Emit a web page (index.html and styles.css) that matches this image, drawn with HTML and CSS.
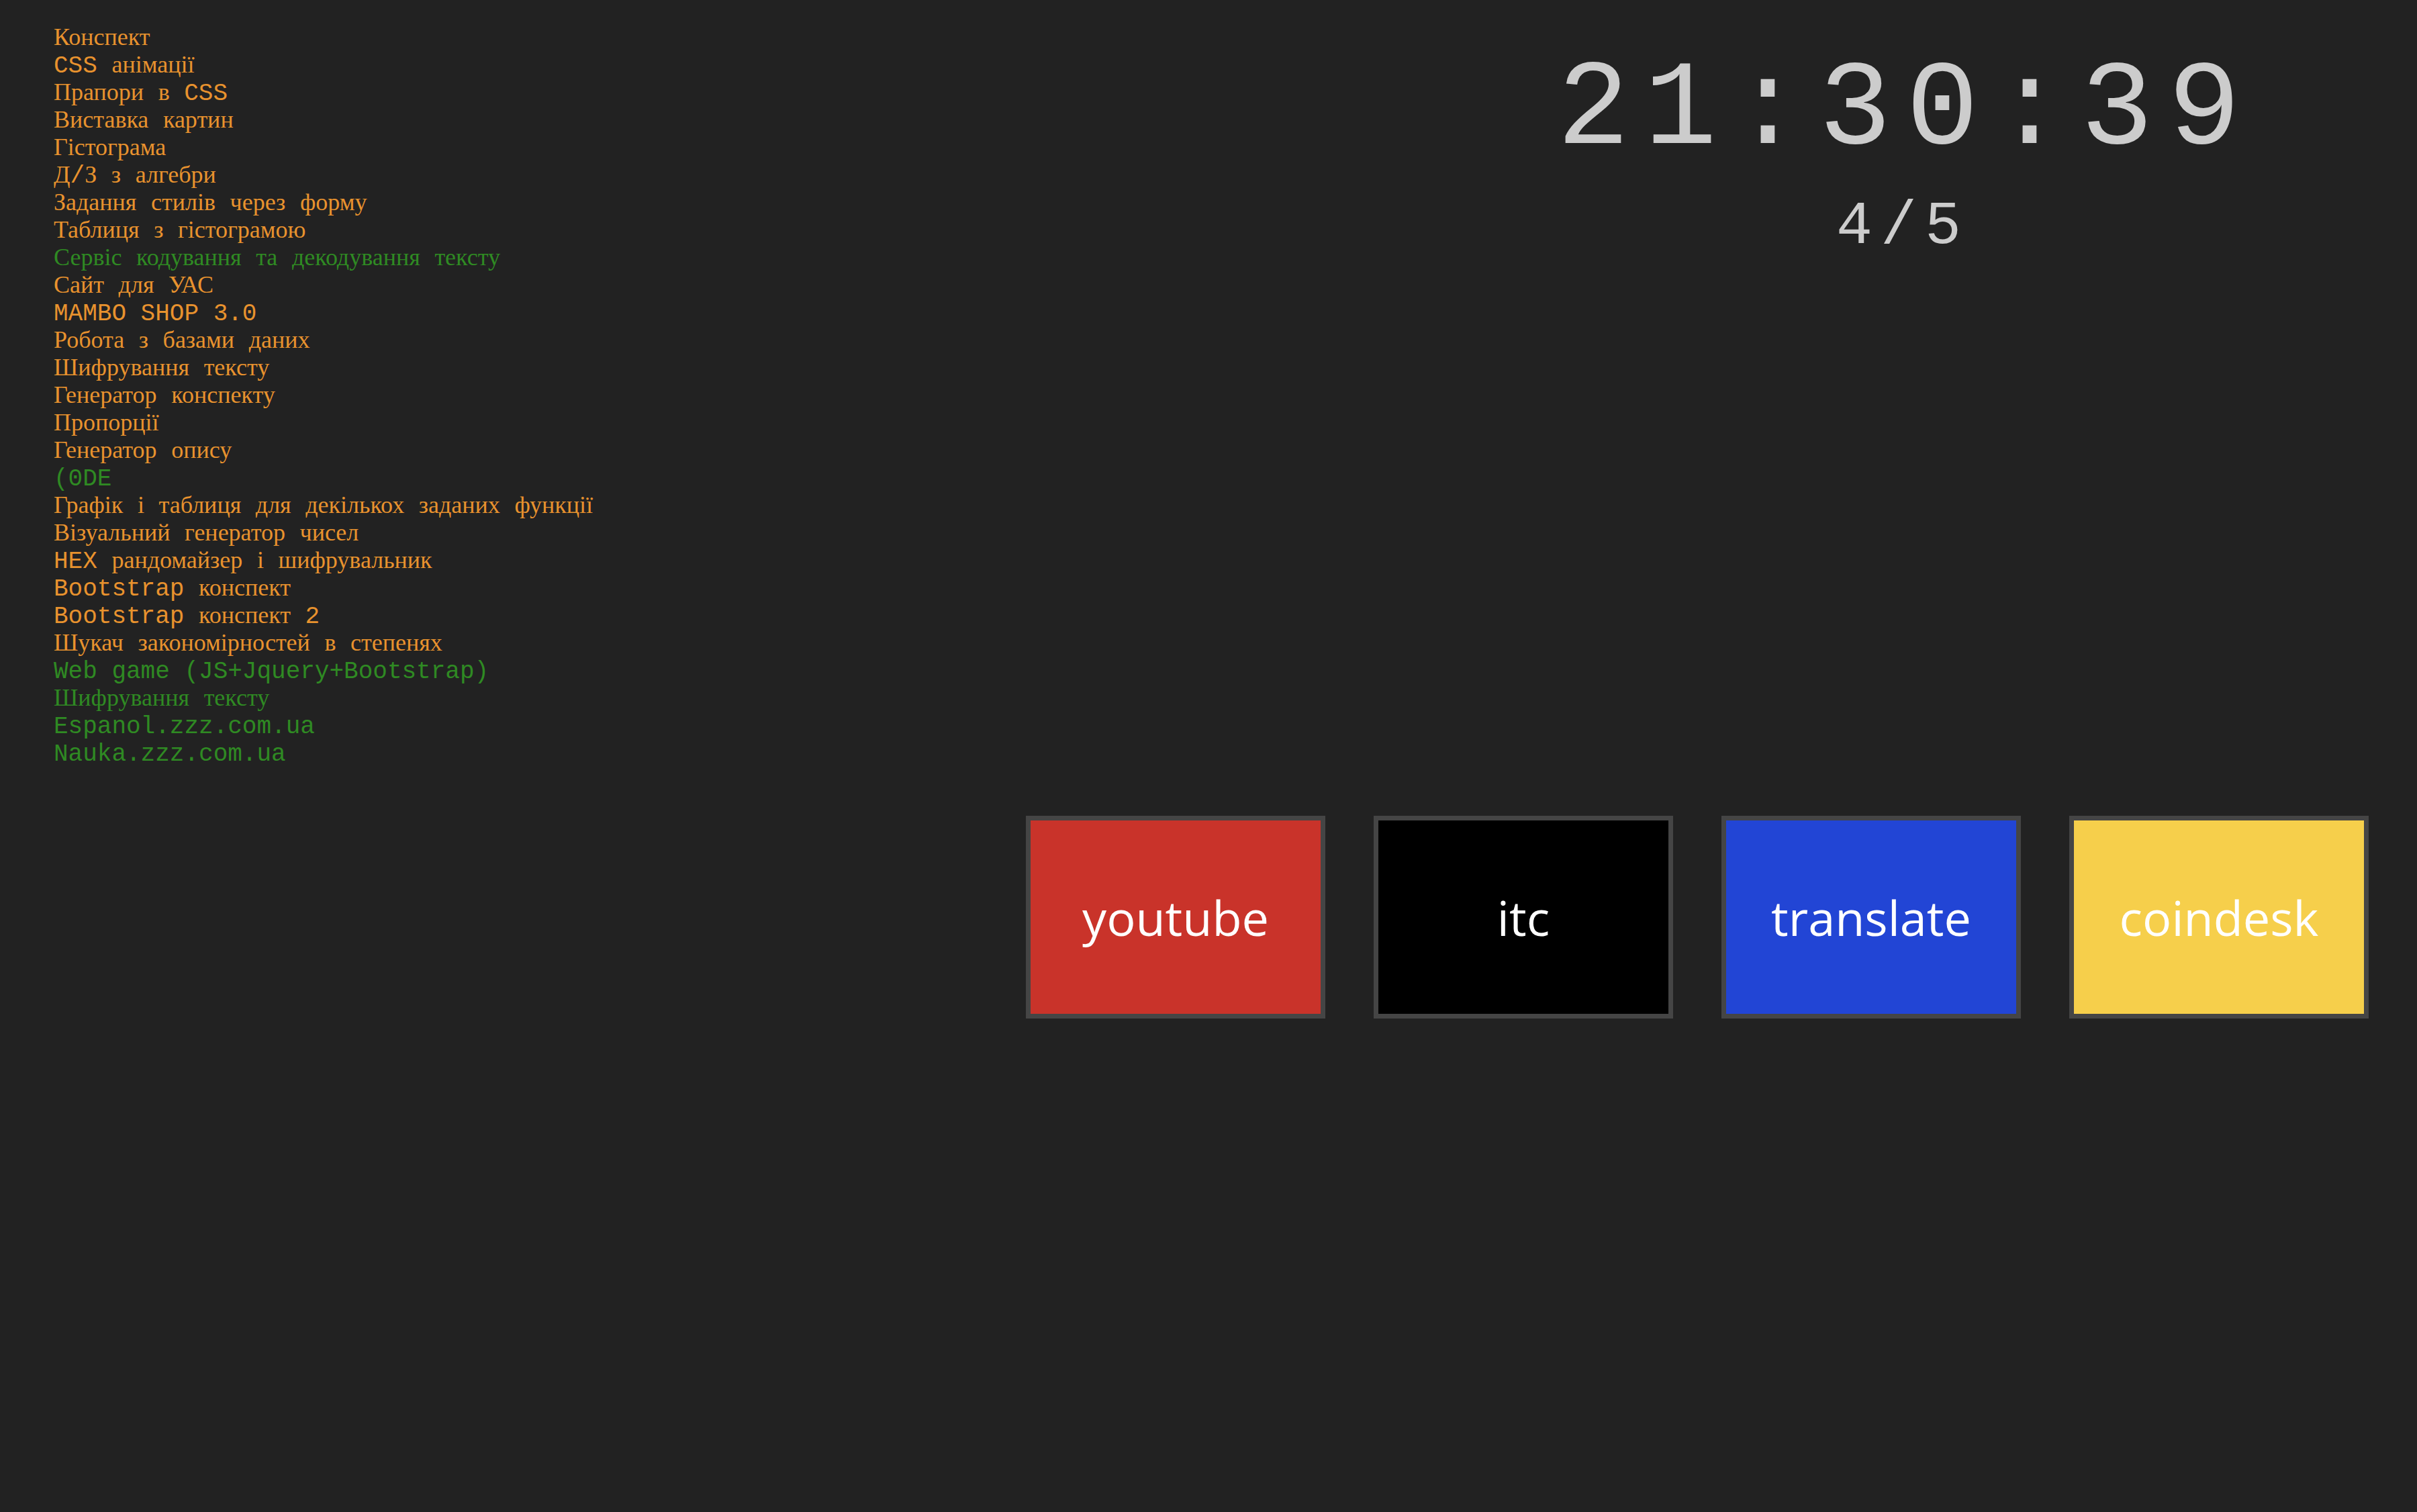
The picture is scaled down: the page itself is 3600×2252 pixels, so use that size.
FILE: index.html
```html
<!DOCTYPE html>
<html lang="uk">
<head>
<meta charset="utf-8">
<title>Start</title>
<link rel="stylesheet" href="styles.css">
</head>
<body>
<div class="top">
  <ul class="links">
    <li class="o"><a><span class="cy">Конспект</span></a></li>
    <li class="o"><a>CSS <span class="cy">анімації</span></a></li>
    <li class="o"><a><span class="cy">Прапори</span> <span class="cy">в</span> CSS</a></li>
    <li class="o"><a><span class="cy">Виставка</span> <span class="cy">картин</span></a></li>
    <li class="o"><a><span class="cy">Гістограма</span></a></li>
    <li class="o"><a><span class="cy">Д</span>/<span class="cy">З</span> <span class="cy">з</span> <span class="cy">алгебри</span></a></li>
    <li class="o"><a><span class="cy">Задання</span> <span class="cy">стилів</span> <span class="cy">через</span> <span class="cy">форму</span></a></li>
    <li class="o"><a><span class="cy">Таблиця</span> <span class="cy">з</span> <span class="cy">гістограмою</span></a></li>
    <li class="g"><a><span class="cy">Сервіс</span> <span class="cy">кодування</span> <span class="cy">та</span> <span class="cy">декодування</span> <span class="cy">тексту</span></a></li>
    <li class="o"><a><span class="cy">Сайт</span> <span class="cy">для</span> <span class="cy">УАС</span></a></li>
    <li class="o"><a>MAMBO SHOP 3.0</a></li>
    <li class="o"><a><span class="cy">Робота</span> <span class="cy">з</span> <span class="cy">базами</span> <span class="cy">даних</span></a></li>
    <li class="o"><a><span class="cy">Шифрування</span> <span class="cy">тексту</span></a></li>
    <li class="o"><a><span class="cy">Генератор</span> <span class="cy">конспекту</span></a></li>
    <li class="o"><a><span class="cy">Пропорції</span></a></li>
    <li class="o"><a><span class="cy">Генератор</span> <span class="cy">опису</span></a></li>
    <li class="g"><a>(0DE</a></li>
    <li class="o"><a><span class="cy">Графік</span> <span class="cy">і</span> <span class="cy">таблиця</span> <span class="cy">для</span> <span class="cy">декількох</span> <span class="cy">заданих</span> <span class="cy">функції</span></a></li>
    <li class="o"><a><span class="cy">Візуальний</span> <span class="cy">генератор</span> <span class="cy">чисел</span></a></li>
    <li class="o"><a>HEX <span class="cy">рандомайзер</span> <span class="cy">і</span> <span class="cy">шифрувальник</span></a></li>
    <li class="o"><a>Bootstrap <span class="cy">конспект</span></a></li>
    <li class="o"><a>Bootstrap <span class="cy">конспект</span> 2</a></li>
    <li class="o"><a><span class="cy">Шукач</span> <span class="cy">закономірностей</span> <span class="cy">в</span> <span class="cy">степенях</span></a></li>
    <li class="g"><a>Web game (JS+Jquery+Bootstrap)</a></li>
    <li class="g"><a><span class="cy">Шифрування</span> <span class="cy">тексту</span></a></li>
    <li class="g"><a>Espanol.zzz.com.ua</a></li>
    <li class="g"><a>Nauka.zzz.com.ua</a></li>
  </ul>
  <div class="clock-block">
    <div class="clock">21:30:39</div>
    <div class="count">4/5</div>
  </div>
</div>
<div class="tiles">
  <a class="tile red">youtube</a>
  <a class="tile black">itc</a>
  <a class="tile blue">translate</a>
  <a class="tile yellow">coindesk</a>
</div>
</body>
</html>
```
FILE: styles.css
```css
html {
  background: #222222;
}
body {
  margin: 0;
  min-height: 2252px;
  background: #222222;
}
.top {
  display: flex;
  align-items: flex-start;
}
.links {
  flex: 1;
  list-style: none;
  margin: 0;
  padding: 37px 0 0 80px;
  font-family: "Liberation Mono", monospace;
  font-size: 36px;
  line-height: 41px;
}
.links li {
  height: 41px;
  white-space: nowrap;
}
.links a {
  color: inherit;
  text-decoration: none;
}
.links .cy {
  font-family: "Liberation Serif", serif;
  line-height: 36px;
}
.o {
  color: #e8922e;
}
.g {
  color: #2f8a23;
}
.clock-block {
  width: 1544px;
  padding-top: 75px;
  text-align: center;
  color: #cccccc;
  font-family: "Liberation Mono", monospace;
}
.clock {
  font-size: 180px;
  line-height: 180px;
  letter-spacing: 22px;
  padding-left: 22px;
}
.count {
  margin-top: 38px;
  font-size: 90px;
  line-height: 90px;
  letter-spacing: 12px;
  padding-left: 12px;
}
.tiles {
  display: flex;
  justify-content: flex-end;
  gap: 72px;
  padding-right: 72px;
  margin-top: 71px;
}
.tile {
  width: 432px;
  height: 288px;
  border: 7px solid #454545;
  display: flex;
  align-items: center;
  justify-content: center;
  color: #ffffff;
  font-family: "Comic Sans MS", "Open Sans", sans-serif;
  font-size: 72px;
  text-decoration: none;
}
.red { background: #c9332a; }
.black { background: #000000; }
.blue { background: #2245d5; }
.yellow { background: #f6cf4b; }
```
